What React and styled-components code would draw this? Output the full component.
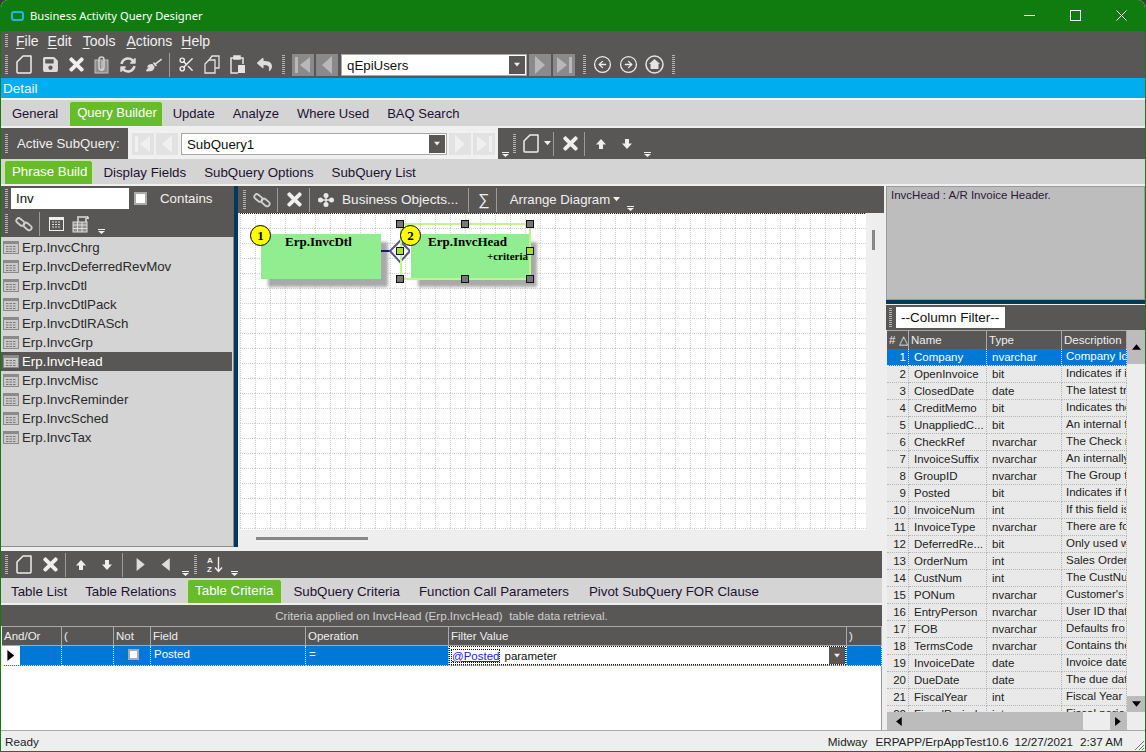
import React from "react";
import styled, { createGlobalStyle } from "styled-components";
import { CircleArrowLeft, CircleArrowRight, Scissors } from "lucide-react";
import { FaBroom, FaReply, FaSave, FaSyncAlt, FaTimes } from "react-icons/fa";

const DARK = "#595755";
const LIGHT = "#d4d4d4";
const GREEN = "#68bb2a";
const BLUE = "#0078d7";
const NAVY = "#033a5c";

const Global = createGlobalStyle`
  html, body { margin: 0; padding: 0; background: #3c3c3c; }
  * { box-sizing: border-box; }
`;

const Win = styled.div`
  background: #eeeeee;
  border: 1px solid #107c10;
  border-top: none;
  border-radius: 8px 8px 0 0;
  color: #222;
  display: flex;
  flex-direction: column;
  font-family: "Liberation Sans", Arial, sans-serif;
  font-size: 13.3px;
  height: 752px;
  overflow: hidden;
  width: 1146px;
`;

const TitleBar = styled.div`
  align-items: center;
  background: #107c10;
  color: #fff;
  display: flex;
  flex: 0 0 31px;
  font-family: "Noto Sans", sans-serif;
  font-size: 11.2px;
  padding-left: 10px;
`;

const TitleLogo = styled.span`
  border: 2px solid #1fb6e8;
  border-radius: 3px;
  height: 10px;
  margin-right: 6px;
  width: 13px;
`;

const WinButtons = styled.div`
  display: flex;
  margin-left: auto;
  padding-right: 1px;
`;

const WinButton = styled.div`
  align-items: center;
  display: flex;
  height: 30px;
  justify-content: center;
  width: 46px;
`;

const Bar = styled.div`
  align-items: center;
  background: ${DARK};
  color: #f0f0f0;
  display: flex;
  flex: 0 0 ${({ $h }) => $h}px;
  padding-left: ${({ $pad }) => $pad ?? 4}px;
`;

const FilterBar = styled(Bar)`
  margin-top: 1px;
`;

const Grip = styled.span`
  background: repeating-linear-gradient(180deg, #b5b5b5 0 1px, transparent 1px 2px);
  flex: none;
  height: ${({ $h }) => $h || 20}px;
  margin-left: ${({ $l }) => $l || 0}px;
  margin-right: ${({ $r }) => $r ?? 3}px;
  width: 3px;
`;

const Sep = styled.span`
  background: #9a9a9a;
  flex: none;
  height: 24px;
  margin: 0 ${({ $r }) => $r ?? 3}px 0 ${({ $l }) => $l ?? 2}px;
  width: 1px;
`;

const Tool = styled.span`
  align-items: center;
  color: #eeeeee;
  display: flex;
  flex: none;
  height: 24px;
  justify-content: center;
  width: ${({ $w }) => $w || 26}px;
`;

const MenuItem = styled.span`
  font-size: 14px;
  margin-right: ${({ $r }) => $r}px;
  u { text-underline-offset: 2px; }
`;

const NavBox = styled.span`
  align-items: center;
  background: ${({ $light }) => ($light ? "#e2e2e2" : "#8a8a8a")};
  display: flex;
  flex: none;
  height: 22px;
  justify-content: center;
  margin-right: ${({ $r }) => $r ?? 2}px;
  width: 22px;
`;

const Combo = styled.div`
  align-items: center;
  background: #fff;
  border: 1px solid #a8a8a8;
  color: #111;
  display: flex;
  flex: none;
  font-size: 13.3px;
  height: 22px;
  margin-right: 2px;
  padding-left: 5px;
  width: ${({ $w }) => $w}px;
`;

const ComboText = styled.span`
  padding-top: 1px;
`;

const ComboDrop = styled.span`
  align-items: center;
  align-self: stretch;
  background: ${DARK};
  display: flex;
  justify-content: center;
  margin: 1px 1px 1px auto;
  width: 16px;
`;

const DetailBar = styled.div`
  background: #00aeef;
  border-bottom: 2px solid #f4f4f4;
  color: #f4f4f4;
  flex: 0 0 22px;
  font-size: 13.5px;
  line-height: 21px;
  min-height: 0;
  overflow: hidden;
  padding-left: 2px;
`;

const TabStrip = styled.div`
  align-items: stretch;
  background: ${LIGHT};
  border-bottom: ${({ $line }) => $line || 0}px solid #f0f0f0;
  display: flex;
  flex: 0 0 ${({ $h }) => $h}px;
  font-size: ${({ $fs }) => $fs || 13.3}px;
  padding-left: ${({ $pad }) => $pad}px;
  padding-top: 1px;
`;

const Tab = styled.div`
  align-items: center;
  background: ${({ $on }) => ($on ? GREEN : "transparent")};
  border: ${({ $on }) => ($on ? "1px solid #c4e8a8" : "none")};
  border-bottom: none;
  border-radius: 3px 3px 0 0;
  color: ${({ $on }) => ($on ? "#fff" : "#1c1230")};
  display: flex;
  margin: ${({ $on, $ml }) => ($on ? "0 1px 0 2px" : `0 0 0 ${$ml || 0}px`)};
  padding: ${({ $on, $pr }) => ($on ? `0 ${$pr || 5}px 3px 7px` : "0 9px")};
  white-space: nowrap;
`;

const ActiveLabel = styled.span`
  font-size: 13.2px;
  margin: 0 7px 0 6px;
  white-space: nowrap;
  width: 104px;
`;

const LightZone = styled.div`
  align-items: center;
  align-self: stretch;
  background: #f0f0f0;
  display: flex;
  flex: none;
  padding-left: 4px;
  width: 370px;
`;

const Overflow = styled.span`
  align-self: flex-end;
  display: flex;
  flex: none;
  justify-content: center;
  margin-bottom: ${({ $b }) => $b ?? 2}px;
  width: ${({ $w }) => $w || 12}px;
`;

const Main = styled.div`
  display: flex;
  flex: 1;
  min-height: 0;
`;

const LeftColumn = styled.div`
  display: flex;
  flex: 0 0 883px;
  flex-direction: column;
`;

const UpperRow = styled.div`
  display: flex;
  flex: 0 0 365px;
`;

const TablePanel = styled.div`
  display: flex;
  flex: 0 0 233px;
  flex-direction: column;
  height: 361px;
`;

const SearchInput = styled.div`
  background: #fff;
  color: #111;
  flex: none;
  font-size: 13.3px;
  height: 21px;
  line-height: 21px;
  padding-left: 5px;
  width: 118px;
`;

const CheckBox = styled.span`
  background: #fff;
  border: 2px solid #aaa;
  flex: none;
  height: ${({ $s }) => $s || 13}px;
  margin: ${({ $m }) => $m || 0};
  width: ${({ $s }) => $s || 13}px;
`;

const TableList = styled.div`
  background: ${LIGHT};
  border: 1px solid #8c8c8c;
  border-left: none;
  border-top: none;
  flex: 1;
  padding-top: 1px;
`;

const TableItem = styled.div`
  align-items: center;
  background: ${({ $on }) => ($on ? DARK : "transparent")};
  color: ${({ $on }) => ($on ? "#fff" : "#2a2a2a")};
  display: flex;
  font-size: 13.3px;
  height: 19px;
  margin-right: 1px;
  padding-left: 2px;
  svg { margin-right: 3px; }
`;

const VSplit = styled.div`
  background: ${NAVY};
  flex: 0 0 4px;
  height: 361px;
`;

const DiagramPanel = styled.div`
  display: flex;
  flex: 1;
  flex-direction: column;
  min-width: 0;
`;

const BarLabel = styled.span`
  font-size: ${({ $s }) => $s || 13.3}px;
  margin-left: ${({ $l }) => $l || 0}px;
  white-space: nowrap;
`;

const DiagramBody = styled.div`
  display: flex;
  flex: 0 0 317px;
  padding-left: 2px;
`;

const Canvas = styled.div`
  background: #fff;
  flex: 0 0 626px;
  overflow: hidden;
  position: relative;
`;

const GridLayer = styled.svg`
  inset: 0;
  position: absolute;
`;

const VThumbTrack = styled.div`
  flex: 1;
  padding: 17px 0 0 6px;
`;

const Thumb = styled.div`
  background: #888;
  height: ${({ $h }) => $h}px;
  margin-left: ${({ $l }) => $l || 0}px;
  width: ${({ $w }) => $w}px;
`;

const HThumbTrack = styled.div`
  padding-top: 7px;
`;

const Node = styled.div`
  background: #90ee90;
  box-shadow: 7px 8px 3px #a9a9a9;
  color: #000;
  font-family: "Liberation Serif", serif;
  font-weight: bold;
  height: 45px;
  left: ${({ $x }) => $x}px;
  position: absolute;
  top: 21px;
  width: ${({ $w }) => $w}px;
`;

const NodeTitle = styled.div`
  font-size: 13px;
  padding-left: ${({ $l }) => $l}px;
`;

const NodeExtra = styled.div`
  font-size: 11px;
  padding-right: 2px;
  text-align: right;
`;

const Badge = styled.div`
  background: #ffff00;
  border: 1px solid #000;
  border-radius: 50%;
  color: #000;
  font-family: "Liberation Serif", serif;
  font-size: 13px;
  font-weight: bold;
  height: 21px;
  left: ${({ $x }) => $x}px;
  line-height: 19px;
  position: absolute;
  text-align: center;
  top: 12px;
  width: 21px;
`;

const SelectFrame = styled.div`
  border: 2px solid #c0f58a;
  height: 57px;
  left: 160px;
  position: absolute;
  top: 10px;
  width: 131px;
`;

const Handle = styled.div`
  background: ${({ $g }) => ($g ? "#a6e22e" : "#777")};
  border: 1px solid #111;
  height: 8px;
  left: ${({ $x }) => $x - 4}px;
  position: absolute;
  top: ${({ $y }) => $y - 4}px;
  width: 8px;
`;

const LinkMark = styled.svg`
  left: 140px;
  position: absolute;
  top: 26px;
`;

const LowerPanel = styled.div`
  display: flex;
  flex: 1;
  flex-direction: column;
  margin-right: 2px;
`;

const Caption = styled.div`
  background: ${DARK};
  color: #cfcfcf;
  flex: 0 0 20px;
  font-size: 11.6px;
  line-height: 21px;
  margin-top: 1px;
  text-align: center;
`;

const CritRow = styled.div`
  display: grid;
  flex: 0 0 20px;
  font-size: 11.5px;
  grid-template-columns: 60px 52px 37px 155px 143px 398px 1fr;
  padding-left: 1px;
`;

const CritHead = styled.div`
  align-items: center;
  background: ${DARK};
  border-bottom: 1px solid #a9a9a9;
  border-right: 1px solid #a9a9a9;
  border-top: 1px solid #a9a9a9;
  color: #eee;
  display: flex;
  padding-left: 2px;
`;

const CritCell = styled.div`
  align-items: center;
  background: ${BLUE};
  border-bottom: 1px dotted #d6e6f5;
  border-right: 1px dotted #d6e6f5;
  color: #fff;
  display: flex;
  justify-content: ${({ $center }) => ($center ? "center" : "flex-start")};
  min-width: 0;
  padding: ${({ $flush }) => ($flush ? "0" : "0 0 3px 3px")};
`;

const RowMarker = styled.span`
  align-items: center;
  align-self: stretch;
  background: #fff;
  display: flex;
  justify-content: center;
  margin: 0 0 -3px -3px;
  width: 18px;
`;

const FilterEditor = styled.div`
  align-items: center;
  background: #fff;
  border: 1px dotted #111;
  color: #111;
  display: flex;
  height: 100%;
  padding-left: 1px;
  width: 100%;
`;

const ParamLink = styled.span`
  border: 1px dotted #111;
  color: #2222dd;
  margin-right: 4px;
  text-decoration: underline;
`;

const FilterDrop = styled.span`
  align-items: center;
  align-self: stretch;
  background: ${DARK};
  display: flex;
  justify-content: center;
  margin-left: auto;
  width: 16px;
`;

const EmptyGrid = styled.div`
  background: #fff;
  border-right: 1px solid #999;
  flex: 1;
`;

const RightPanel = styled.div`
  display: flex;
  flex: 1;
  flex-direction: column;
  min-width: 0;
  padding-left: 2px;
`;

const InfoBox = styled.div`
  background: #bdbdbd;
  border: 1px solid #9a9a9a;
  color: #2a1a3a;
  flex: 0 0 114px;
  font-size: 11.5px;
  padding: 2px 4px;
`;

const HSplit = styled.div`
  background: ${NAVY};
  flex: 0 0 4px;
`;

const FilterBox = styled.div`
  background: #fff;
  color: #111;
  font-size: 13.5px;
  height: 21px;
  line-height: 21px;
  padding-left: 5px;
  width: 109px;
`;

const GridFrame = styled.div`
  display: grid;
  flex: 1;
  grid-template-columns: 240px 18px;
  grid-template-rows: 1fr 18px;
  min-height: 0;
  padding-left: 1px;
`;

const ColumnsPane = styled.div`
  overflow: hidden;
`;

const ColRow = styled.div`
  display: grid;
  font-size: 11.5px;
  grid-template-columns: 22px 78px 75px 65px;
  height: ${({ $head }) => ($head ? 19 : 17)}px;
`;

const ColHead = styled.div`
  align-items: center;
  background: ${DARK};
  border-right: 1px solid #a9a9a9;
  border-top: 1px solid #a9a9a9;
  color: #eee;
  display: flex;
  overflow: hidden;
  padding-left: 2px;
  white-space: nowrap;
`;

const ColCell = styled.div`
  align-items: center;
  background: ${({ $on }) => ($on ? BLUE : "#e9e9e9")};
  border-bottom: 1px dotted ${({ $on }) => ($on ? "#d6e6f5" : "#b5b5b5")};
  border-right: 1px dotted ${({ $on }) => ($on ? "#d6e6f5" : "#b5b5b5")};
  color: ${({ $on }) => ($on ? "#fff" : "#222")};
  display: flex;
  justify-content: ${({ $num }) => ($num ? "flex-end" : "flex-start")};
  overflow: hidden;
  padding: ${({ $num, $desc }) => ($num ? "0 2px 0 0" : $desc ? "0 0 3px 4px" : "0 0 0 5px")};
  white-space: nowrap;
`;

const VBar = styled.div`
  background: #ededed;
  display: flex;
  flex-direction: column;
  justify-content: space-between;
`;

const ScrollEnd = styled.span`
  align-items: center;
  background: #bcbcbc;
  display: flex;
  height: ${({ $h }) => $h || 16}px;
  justify-content: center;
`;

const HBar = styled.div`
  background: #ededed;
  display: flex;
`;

const HTrack = styled.span`
  align-items: center;
  background: #bcbcbc;
  display: flex;
  padding-left: 8px;
  width: 196px;
`;

const HEnd = styled.span`
  align-items: center;
  background: #bcbcbc;
  display: flex;
  justify-content: center;
  margin-left: auto;
  width: 17px;
`;

const StatusBar = styled.div`
  align-items: center;
  background: #eeeeee;
  border-top: 1px solid #aaa;
  color: #222;
  display: flex;
  flex: 0 0 21px;
  font-size: 11.7px;
  padding-left: 4px;
  position: relative;
`;

const StatusItem = styled.span`
  margin-left: ${({ $l }) => $l}px;
  white-space: nowrap;
`;

const ResizeGrip = styled.svg`
  bottom: 0;
  position: absolute;
  right: 0;
`;

const SortLetters = styled.span`
  display: flex;
  flex-direction: column;
  font-size: 8px;
  font-weight: bold;
  line-height: 9px;
  margin-right: 1px;
`;

const Tri = ({ dir = "down", s = 6, c = "#f0f0f0" }) => {
  const d = {
    down: "M0 1H8L4 6Z",
    up: "M0 6H8L4 1Z",
    left: "M6 0V8L1 4Z",
    right: "M1 0V8L6 4Z",
  }[dir];
  return (
    <svg width={s} height={s} viewBox="0 0 8 8">
      <path d={d} fill={c} />
    </svg>
  );
};

const OverflowMark = () => (
  <svg width="7" height="5" viewBox="0 0 7 5">
    <path d="M0 0H7V1H0ZM0 2H7L3.500 5Z" fill="#f0f0f0" />
  </svg>
);

const NavGlyph = ({ kind, c }) => {
  const paths = {
    first: "M3 3H6V19H3ZM18 3V19L8 11Z",
    prev: "M16 2V20L6 11Z",
    next: "M6 2V20L16 11Z",
    last: "M4 3V19L14 11ZM16 3H19V19H16Z",
  };
  return (
    <svg width="22" height="22" viewBox="0 0 22 22">
      <path d={paths[kind]} fill={c} />
    </svg>
  );
};

const NewDoc = () => (
  <svg width="17" height="19" viewBox="0 0 17 19" fill="none" stroke="#eee" strokeWidth="1.5">
    <path d="M1 7L7 1H15V17Q15 18 14 18H2Q1 18 1 17Z" strokeLinejoin="round" />
  </svg>
);

const ClipDoc = () => (
  <svg width="18" height="18" viewBox="0 0 18 18">
    <rect x="2" y="4" width="13" height="13" fill="#8d8d8d" stroke="#c4c4c4" />
    <rect x="6" y="1" width="5" height="13" rx="2.500" fill="none" stroke="#d0d0d0" strokeWidth="1.500" />
    <path d="M9 5V15" stroke="#ddd" />
  </svg>
);

const CopyDocs = () => (
  <svg width="16" height="19" viewBox="0 0 16 19" fill="none" stroke="#e4e4e4" strokeWidth="1.300">
    <path d="M5 5L8 1H15V13H11" />
    <path d="M1 9L5 5H11V18H1Z" />
  </svg>
);

const PasteBoard = () => (
  <svg width="16" height="19" viewBox="0 0 16 19" fill="none" stroke="#e4e4e4" strokeWidth="1.500">
    <path d="M4 3H1V18H8" />
    <path d="M10 3H13V9" />
    <rect x="4" y="1" width="6" height="3" fill="#e4e4e4" />
    <rect x="8" y="10" width="7" height="8" fill="#e4e4e4" stroke="none" />
  </svg>
);

const HomeCircle = () => (
  <svg width="19" height="19" viewBox="0 0 19 19" fill="none" stroke="#e4e4e4" strokeWidth="1.500">
    <circle cx="9.500" cy="9.500" r="8.500" />
    <path d="M9.500 4L15 9H13.500V14H5.500V9H4Z" fill="#e4e4e4" stroke="none" />
  </svg>
);

const Chain = () => (
  <svg width="18" height="18" viewBox="0 0 20 20" fill="none" stroke="#cfcfcf" strokeWidth="2">
    <rect x="1" y="5" width="10" height="5.500" rx="2.700" transform="rotate(40 6 7.700)" />
    <rect x="9" y="10" width="10" height="5.500" rx="2.700" transform="rotate(40 14 12.700)" />
  </svg>
);

const Calendar = () => (
  <svg width="15" height="14" viewBox="0 0 15 14">
    <rect x=".5" y=".5" width="14" height="13" fill="none" stroke="#eee" />
    <rect x="1" y="1" width="13" height="2" fill="#eee" />
    <path d="M3 5H12M3 7.500H12M3 10H12" stroke="#ddd" strokeDasharray="2 1" />
  </svg>
);

const TableScroll = () => (
  <svg width="18" height="18" viewBox="0 0 18 18">
    <path d="M5 1H15V8H13V3H7V7H5Z" fill="#bcbcbc" />
    <path d="M15 1Q17 1 17 4H15Z" fill="#ddd" />
    <rect x="1" y="7" width="14" height="10" fill="#8f8f8f" stroke="#ddd" />
    <path d="M1 10H15M1 13.500H15M5.500 7V17M10 7V17" stroke="#ddd" />
  </svg>
);

const Hub = () => (
  <svg width="16" height="14" viewBox="0 0 16 14" fill="#e8e8e8">
    <circle cx="8" cy="2.500" r="2.500" />
    <circle cx="8" cy="11.500" r="2.500" />
    <circle cx="2.500" cy="7" r="2.500" />
    <circle cx="13.500" cy="7" r="2.500" />
    <path d="M3 6.300H13V7.700H3ZM7.300 3H8.700V11H7.300Z" />
  </svg>
);

const ArrowUp = () => (
  <svg width="12" height="12" viewBox="0 0 12 12">
    <path d="M6 1L11 6.500H8V11H4V6.500H1Z" fill="#eee" />
  </svg>
);

const ArrowDown = () => (
  <svg width="12" height="12" viewBox="0 0 12 12">
    <path d="M6 11L11 5.500H8V1H4V5.500H1Z" fill="#eee" />
  </svg>
);

const ListIcon = () => (
  <svg width="16" height="13" viewBox="0 0 16 13">
    <rect x=".5" y=".5" width="15" height="12" fill="#c9c9c9" stroke="#8a8a8a" />
    <rect x="1" y="1" width="14" height="2" fill="#8a8a8a" />
    <path d="M3 5.500H13M3 8H13M3 10.500H13" stroke="#777" strokeDasharray="2.500 1" />
  </svg>
);

const SortDownArrow = () => (
  <svg width="9" height="17" viewBox="0 0 9 17">
    <path d="M4.500 1V15M1 11.500L4.500 15.500L8 11.500" stroke="#eee" strokeWidth="1.400" fill="none" />
  </svg>
);

const tables = [
  "Erp.InvcChrg",
  "Erp.InvcDeferredRevMov",
  "Erp.InvcDtl",
  "Erp.InvcDtlPack",
  "Erp.InvcDtlRASch",
  "Erp.InvcGrp",
  "Erp.InvcHead",
  "Erp.InvcMisc",
  "Erp.InvcReminder",
  "Erp.InvcSched",
  "Erp.InvcTax",
];

const columns = [
  ["Company", "nvarchar", "Company Id"],
  ["OpenInvoice", "bit", "Indicates if in"],
  ["ClosedDate", "date", "The latest tra"],
  ["CreditMemo", "bit", "Indicates the"],
  ["UnappliedC...", "bit", "An internal fl"],
  ["CheckRef", "nvarchar", "The Check n"],
  ["InvoiceSuffix", "nvarchar", "An internally"],
  ["GroupID", "nvarchar", "The Group t"],
  ["Posted", "bit", "Indicates if th"],
  ["InvoiceNum", "int", "If this field is"],
  ["InvoiceType", "nvarchar", "There are fo"],
  ["DeferredRe...", "bit", "Only used w"],
  ["OrderNum", "int", "Sales Order"],
  ["CustNum", "int", "The CustNu"],
  ["PONum", "nvarchar", "Customer's"],
  ["EntryPerson", "nvarchar", "User ID that"],
  ["FOB", "nvarchar", "Defaults fro"],
  ["TermsCode", "nvarchar", "Contains the"],
  ["InvoiceDate", "date", "Invoice date"],
  ["DueDate", "date", "The due dat"],
  ["FiscalYear", "int", "Fiscal Year i"],
  ["FiscalPeriod", "int", "Fiscal period"],
];

const handles = [
  [160, 11],
  [225, 11],
  [290, 11],
  [160, 38, true],
  [290, 38, true],
  [160, 66],
  [225, 66],
  [290, 66],
];

export default function App() {
  return (
    <Win>
      <Global />
      <TitleBar>
        <TitleLogo />
        Business Activity Query Designer
        <WinButtons>
          <WinButton>
            <svg width="11" height="11"><path d="M0 5.500H11" stroke="#fff" /></svg>
          </WinButton>
          <WinButton>
            <svg width="11" height="11"><rect x=".5" y=".5" width="10" height="10" fill="none" stroke="#fff" /></svg>
          </WinButton>
          <WinButton>
            <svg width="11" height="11"><path d="M.5 .5L10.500 10.500M10.500 .5L.5 10.500" stroke="#fff" /></svg>
          </WinButton>
        </WinButtons>
      </TitleBar>

      <Bar $h={20}>
        <Grip $h={14} $r={8} />
        <MenuItem $r={9}><u>F</u>ile</MenuItem>
        <MenuItem $r={11}><u>E</u>dit</MenuItem>
        <MenuItem $r={11}><u>T</u>ools</MenuItem>
        <MenuItem $r={9}><u>A</u>ctions</MenuItem>
        <MenuItem $r={0}><u>H</u>elp</MenuItem>
      </Bar>

      <Bar $h={27}>
        <Grip />
        <Tool><NewDoc /></Tool>
        <Tool><FaSave size={17} color="#dcdcdc" /></Tool>
        <Tool><FaTimes size={21} /></Tool>
        <Tool><ClipDoc /></Tool>
        <Tool><FaSyncAlt size={16} color="#dcdcdc" /></Tool>
        <Tool><FaBroom size={16} color="#dcdcdc" /></Tool>
        <Sep />
        <Tool><Scissors size={17} strokeWidth={2} /></Tool>
        <Tool><CopyDocs /></Tool>
        <Tool><PasteBoard /></Tool>
        <Tool><FaReply size={15} color="#dcdcdc" /></Tool>
        <Grip $l={5} $r={7} />
        <NavBox><NavGlyph kind="first" c="#b8b8b8" /></NavBox>
        <NavBox $r={3}><NavGlyph kind="prev" c="#b8b8b8" /></NavBox>
        <Combo $w={186}>
          <ComboText>qEpiUsers</ComboText>
          <ComboDrop><Tri /></ComboDrop>
        </Combo>
        <NavBox><NavGlyph kind="next" c="#b8b8b8" /></NavBox>
        <NavBox><NavGlyph kind="last" c="#b8b8b8" /></NavBox>
        <Grip $l={6} $r={3} />
        <Tool><CircleArrowLeft size={19} strokeWidth={1.6} /></Tool>
        <Tool><CircleArrowRight size={19} strokeWidth={1.6} /></Tool>
        <Tool><HomeCircle /></Tool>
        <Grip $l={5} />
      </Bar>

      <DetailBar>Detail</DetailBar>

      <TabStrip $h={28} $line={2} $pad={2} $fs={13}>
        <Tab>General</Tab>
        <Tab $on>Query Builder</Tab>
        <Tab>Update</Tab>
        <Tab>Analyze</Tab>
        <Tab>Where Used</Tab>
        <Tab>BAQ Search</Tab>
      </TabStrip>

      <Bar $h={31}>
        <Grip />
        <ActiveLabel>Active SubQuery:</ActiveLabel>
        <LightZone>
          <NavBox $light><NavGlyph kind="first" c="#f0f0f0" /></NavBox>
          <NavBox $light $r={3}><NavGlyph kind="prev" c="#f0f0f0" /></NavBox>
          <Combo $w={266}>
            <ComboText>SubQuery1</ComboText>
            <ComboDrop><Tri /></ComboDrop>
          </Combo>
          <NavBox $light><NavGlyph kind="next" c="#f0f0f0" /></NavBox>
          <NavBox $light><NavGlyph kind="last" c="#f0f0f0" /></NavBox>
        </LightZone>
        <Overflow $w={14}><OverflowMark /></Overflow>
        <Grip $l={1} $r={3} />
        <Tool $w={24}><NewDoc /></Tool>
        <Tool $w={8}><Tri s={7} /></Tool>
        <Sep $l={2} $r={3} />
        <Tool $w={26}><FaTimes size={21} /></Tool>
        <Sep $l={1} $r={3} />
        <Tool $w={26}><ArrowUp /></Tool>
        <Tool $w={26}><ArrowDown /></Tool>
        <Overflow $w={14}><OverflowMark /></Overflow>
      </Bar>

      <TabStrip $h={27} $line={2} $pad={1}>
        <Tab $on>Phrase Build</Tab>
        <Tab>Display Fields</Tab>
        <Tab>SubQuery Options</Tab>
        <Tab>SubQuery List</Tab>
      </TabStrip>

      <Main>
        <LeftColumn>
          <UpperRow>
            <TablePanel>
              <Bar $h={25}>
                <Grip />
                <SearchInput>Inv</SearchInput>
                <CheckBox $m="0 13px 0 5px" />
                <BarLabel>Contains</BarLabel>
              </Bar>
              <Bar $h={26}>
                <Grip />
                <Tool><Chain /></Tool>
                <Sep $l={2} $r={3} />
                <Tool><Calendar /></Tool>
                <Tool $w={24}><TableScroll /></Tool>
                <Overflow $w={16} $b={3}><OverflowMark /></Overflow>
              </Bar>
              <TableList>
                {tables.map((t) => (
                  <TableItem key={t} $on={t === "Erp.InvcHead"}>
                    <ListIcon />
                    {t}
                  </TableItem>
                ))}
              </TableList>
            </TablePanel>
            <VSplit />
            <DiagramPanel>
              <Bar $h={27}>
                <Grip $l={1} />
                <Tool $w={26}><Chain /></Tool>
                <Sep $l={2} $r={3} />
                <Tool $w={26}><FaTimes size={21} /></Tool>
                <Sep $l={2} $r={3} />
                <Tool $w={26}><Hub /></Tool>
                <BarLabel $s={13.6} $l={3}>Business Objects...</BarLabel>
                <Sep $l={10} $r={9} />
                <BarLabel $s={16}>∑</BarLabel>
                <Sep $l={6} $r={13} />
                <BarLabel $s={13.2}>Arrange Diagram</BarLabel>
                <Tool $w={12}><Tri s={7} /></Tool>
                <Overflow $w={16}><OverflowMark /></Overflow>
              </Bar>
              <DiagramBody>
                <Canvas>
                  <GridLayer width="626" height="317">
                    <defs>
                      <pattern id="dots" width="15" height="15" patternUnits="userSpaceOnUse">
                        <path d="M0 .5H15M.5 0V15" stroke="#cfcfcf" strokeDasharray="1 1" fill="none" />
                      </pattern>
                    </defs>
                    <rect width="626" height="317" fill="url(#dots)" />
                    <path d="M0 .5H626" stroke="#222" strokeDasharray="1 1" />
                  </GridLayer>
                  <Node $x={21} $w={120}>
                    <NodeTitle $l={24}>Erp.InvcDtl</NodeTitle>
                  </Node>
                  <LinkMark width="30" height="26" viewBox="0 0 30 26">
                    <path d="M1 12H10" stroke="#1a1a70" strokeWidth="2" />
                    <path d="M20 2L30 12L20 23L10 12Z" fill="#fff" stroke="#555590" strokeWidth="2" />
                  </LinkMark>
                  <Node $x={171} $w={119}>
                    <NodeTitle $l={17}>Erp.InvcHead</NodeTitle>
                    <NodeExtra>+criteria</NodeExtra>
                  </Node>
                  <SelectFrame />
                  {handles.map(([x, y, g]) => (
                    <Handle key={`${x}-${y}`} $x={x} $y={y} $g={g} />
                  ))}
                  <Badge $x={10}>1</Badge>
                  <Badge $x={160}>2</Badge>
                </Canvas>
                <VThumbTrack>
                  <Thumb $w={3} $h={20} />
                </VThumbTrack>
              </DiagramBody>
              <HThumbTrack>
                <Thumb $l={18} $w={112} $h={3} />
              </HThumbTrack>
            </DiagramPanel>
          </UpperRow>

          <LowerPanel>
            <Bar $h={27}>
              <Grip />
              <Tool><NewDoc /></Tool>
              <Tool><FaTimes size={21} /></Tool>
              <Sep $l={2} $r={2} />
              <Tool><ArrowUp /></Tool>
              <Tool><ArrowDown /></Tool>
              <Sep $l={2} $r={5} />
              <Tool><Tri dir="right" s={13} c="#ddd" /></Tool>
              <Tool $w={24}><Tri dir="left" s={13} c="#ddd" /></Tool>
              <Overflow $w={14}><OverflowMark /></Overflow>
              <Grip $l={2} $r={7} />
              <Tool $w={22}>
                <SortLetters><span>A</span><span>Z</span></SortLetters>
                <SortDownArrow />
              </Tool>
              <Overflow $w={16}><OverflowMark /></Overflow>
            </Bar>
            <TabStrip $h={26} $line={1} $pad={1}>
              <Tab>Table List</Tab>
              <Tab>Table Relations</Tab>
              <Tab $on $pr={8}>Table Criteria</Tab>
              <Tab $ml={1}>SubQuery Criteria</Tab>
              <Tab $ml={1}>Function Call Parameters</Tab>
              <Tab $ml={2}>Pivot SubQuery FOR Clause</Tab>
            </TabStrip>
            <Caption>Criteria applied on InvcHead (Erp.InvcHead)&nbsp; table data retrieval.</Caption>
            <CritRow>
              <CritHead>And/Or</CritHead>
              <CritHead>(</CritHead>
              <CritHead>Not</CritHead>
              <CritHead>Field</CritHead>
              <CritHead>Operation</CritHead>
              <CritHead>Filter Value</CritHead>
              <CritHead>)</CritHead>
            </CritRow>
            <CritRow>
              <CritCell><RowMarker><Tri dir="right" s={11} c="#000" /></RowMarker></CritCell>
              <CritCell />
              <CritCell $center><CheckBox $s={11} /></CritCell>
              <CritCell>Posted</CritCell>
              <CritCell>=</CritCell>
              <CritCell $flush>
                <FilterEditor>
                  <ParamLink>@Posted</ParamLink>
                  parameter
                  <FilterDrop><Tri /></FilterDrop>
                </FilterEditor>
              </CritCell>
              <CritCell />
            </CritRow>
            <EmptyGrid />
          </LowerPanel>
        </LeftColumn>

        <RightPanel>
          <InfoBox>InvcHead : A/R Invoice Header.</InfoBox>
          <HSplit />
          <FilterBar $h={25} $pad={3}>
            <Grip $r={4} />
            <FilterBox>--Column Filter--</FilterBox>
          </FilterBar>
          <GridFrame>
            <ColumnsPane>
              <ColRow $head>
                <ColHead># △</ColHead>
                <ColHead>Name</ColHead>
                <ColHead>Type</ColHead>
                <ColHead>Description</ColHead>
              </ColRow>
              {columns.map(([name, type, desc], i) => (
                <ColRow key={name}>
                  <ColCell $num $on={i === 0}>{i + 1}</ColCell>
                  <ColCell $on={i === 0}>{name}</ColCell>
                  <ColCell $on={i === 0}>{type}</ColCell>
                  <ColCell $desc $on={i === 0}>{desc}</ColCell>
                </ColRow>
              ))}
            </ColumnsPane>
            <VBar>
              <ScrollEnd $h={34}><Tri dir="up" s={9} c="#000" /></ScrollEnd>
              <ScrollEnd $h={16}><Tri s={9} c="#000" /></ScrollEnd>
            </VBar>
            <HBar>
              <HTrack><Tri dir="left" s={9} c="#000" /></HTrack>
              <HEnd><Tri dir="right" s={9} c="#000" /></HEnd>
            </HBar>
            <VBar />
          </GridFrame>
        </RightPanel>
      </Main>

      <StatusBar>
        Ready
        <StatusItem $l={789}>Midway</StatusItem>
        <StatusItem $l={8}>ERPAPP/ErpAppTest10.6</StatusItem>
        <StatusItem $l={6}>12/27/2021</StatusItem>
        <StatusItem $l={7}>2:37 AM</StatusItem>
        <ResizeGrip width="13" height="13" viewBox="0 0 13 13">
          <path d="M12 3L3 12M12 7L7 12M12 10L10 12" stroke="#777" />
        </ResizeGrip>
      </StatusBar>
    </Win>
  );
}
